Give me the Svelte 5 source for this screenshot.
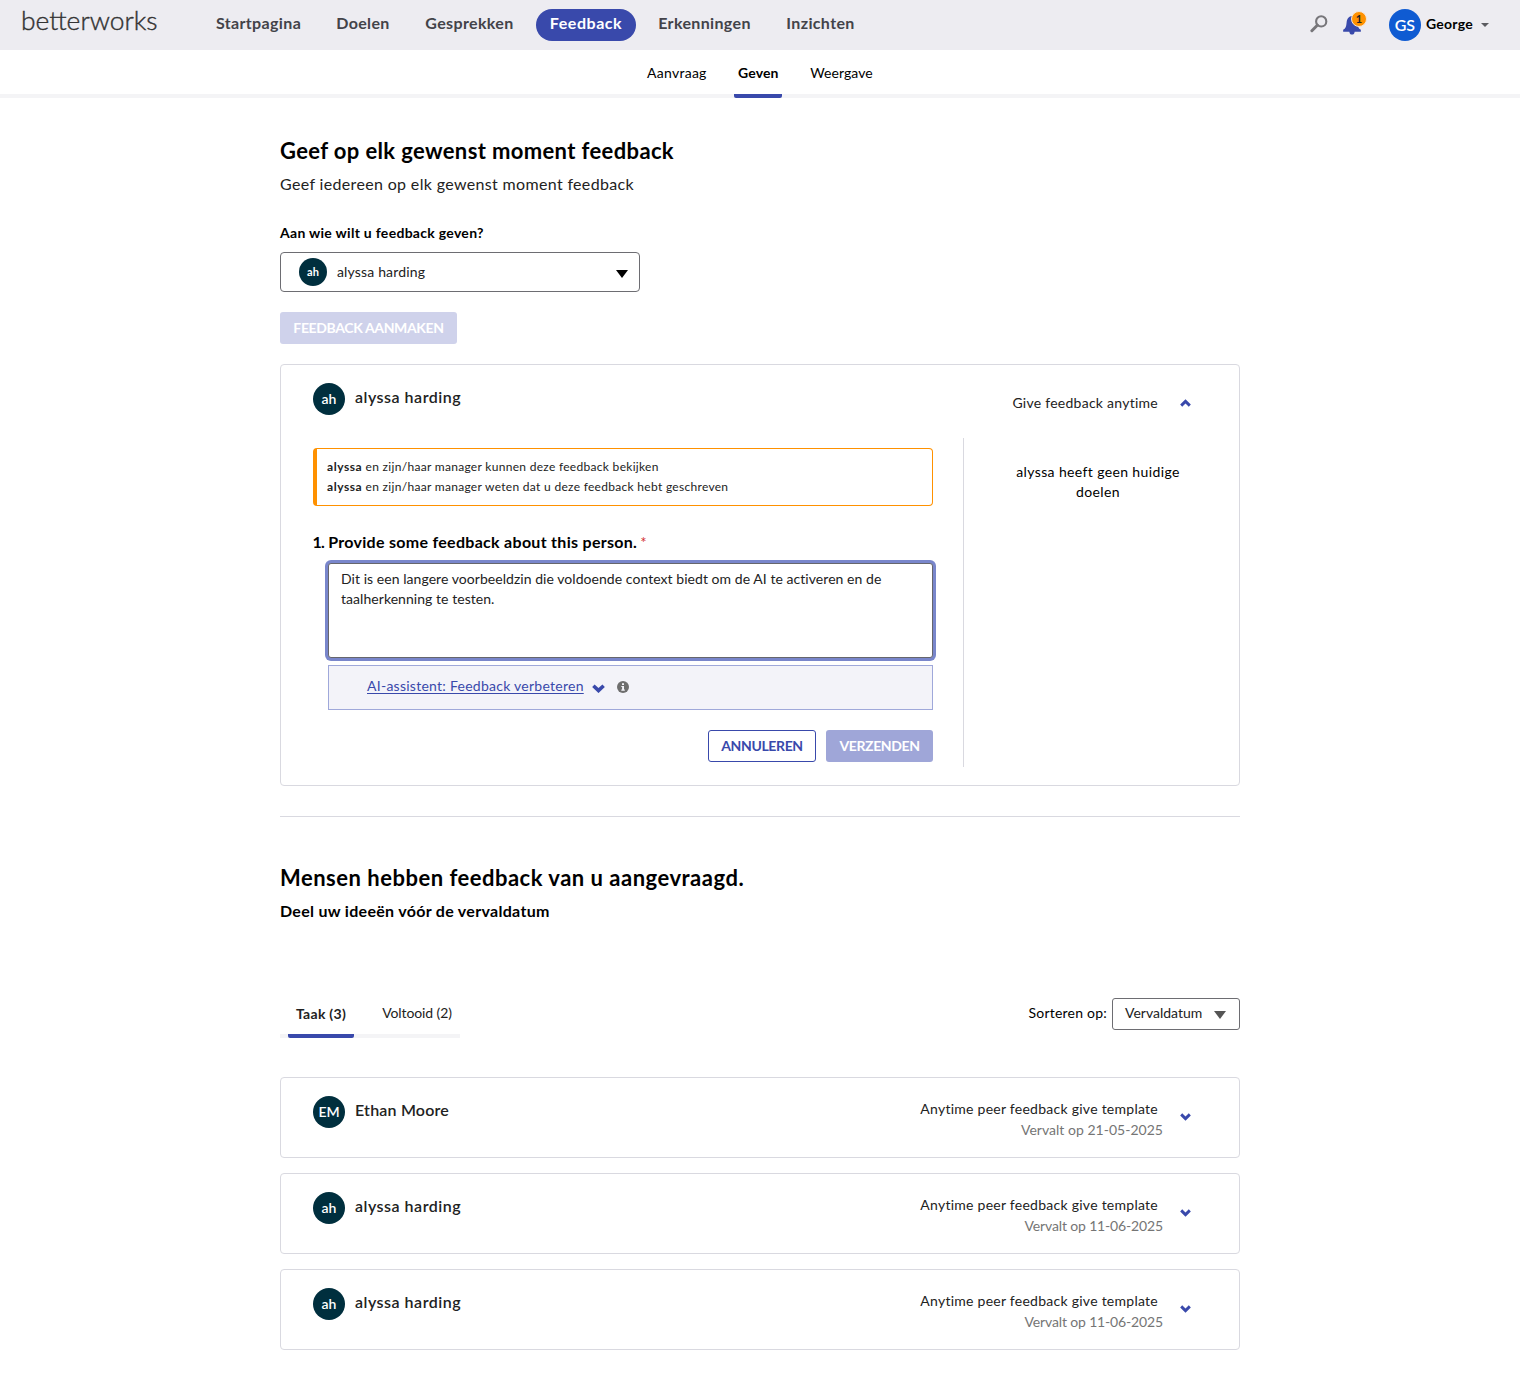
<script>
  const navItems = ['Startpagina', 'Doelen', 'Gesprekken', 'Feedback', 'Erkenningen', 'Inzichten'];
  const subItems = ['Aanvraag', 'Geven', 'Weergave'];
  const requests = [
    { initials: 'EM', name: 'Ethan Moore', due: '21-05-2025' },
    { initials: 'ah', name: 'alyssa harding', due: '11-06-2025' },
    { initials: 'ah', name: 'alyssa harding', due: '11-06-2025' },
  ];

  let activeNav = $state('Feedback');
  let activeSub = $state('Geven');
  let feedback = $state(
    'Dit is een langere voorbeeldzin die voldoende context biedt om de AI te activeren en de taalherkenning te testen.'
  );
</script>

{#snippet chevron(up, large)}
  <svg class="chevron" class:up class:large viewBox="0 0 12 9" aria-hidden="true">
    <path d="M2.3 .4 6 3.800 9.700 .4 12 2.800 6 8.600 0 2.800Z" />
  </svg>
{/snippet}

<header class="topbar">
  <div class="logo">betterworks</div>
  <nav class="main-nav">
    {#each navItems as item}
      <button class="nav-item" class:active={item === activeNav} onclick={() => (activeNav = item)}>{item}</button>
    {/each}
  </nav>
  <div class="tools">
    <svg class="search" viewBox="0 0 18 18" aria-hidden="true">
      <circle cx="11.200" cy="6.400" r="5.100" />
      <path d="M7.300 10.300 1.900 15.700" />
    </svg>
    <div class="bell">
      <svg viewBox="0 0 20 20" aria-hidden="true">
        <path d="M10 0C6 .6 4.600 3.400 4.300 7 4 10.800 3.200 13 .7 14.600V16.600H7.200C7.400 18.600 8.500 19.600 10 19.600S12.600 18.600 12.800 16.600H19.300V14.600C16.800 13 16 10.800 15.700 7 15.400 3.400 14 .6 10 0Z" />
      </svg>
      <span class="badge">1</span>
    </div>
    <div class="user-avatar">GS</div>
    <span class="user-name">George</span>
    <span class="user-caret"></span>
  </div>
</header>

<nav class="sub-nav">
  {#each subItems as item}
    <button class="sub-item" class:active={item === activeSub} onclick={() => (activeSub = item)}>{item}</button>
  {/each}
</nav>

<main>
  <h1>Geef op elk gewenst moment feedback</h1>
  <p class="lead">Geef iedereen op elk gewenst moment feedback</p>

  <div class="field-label">Aan wie wilt u feedback geven?</div>
  <div class="person-select">
    <div class="avatar small">ah</div>
    <span class="person">alyssa harding</span>
    <span class="triangle"></span>
  </div>
  <button class="btn create" disabled>FEEDBACK AANMAKEN</button>

  <section class="card form-card">
    <div class="form-head">
      <div class="avatar">ah</div>
      <span class="name">alyssa harding</span>
      <span class="template">Give feedback anytime</span>
      {@render chevron(true, false)}
    </div>
    <div class="form-body">
      <div class="form-main">
        <div class="notice">
          <div><b>alyssa</b> en zijn/haar manager kunnen deze feedback bekijken</div>
          <div><b>alyssa</b> en zijn/haar manager weten dat u deze feedback hebt geschreven</div>
        </div>
        <div class="question"><span class="number">1.</span> Provide some feedback about this person. <span class="required">*</span></div>
        <textarea bind:value={feedback} spellcheck="false"></textarea>
        <div class="assistant">
          <a href="#assistant">AI-assistent: Feedback verbeteren</a>
          {@render chevron(false, true)}
          <svg class="info" viewBox="0 0 12 12" aria-hidden="true">
            <circle cx="6" cy="6" r="6" />
            <path d="M5 2.200H7V3.900H5ZM4.300 5H7V8.500H7.800V9.700H4.300V8.500H5.100V6.100H4.300Z" />
          </svg>
        </div>
        <div class="actions">
          <button class="btn cancel">ANNULEREN</button>
          <button class="btn send" disabled>VERZENDEN</button>
        </div>
      </div>
      <aside>alyssa heeft geen huidige doelen</aside>
    </div>
  </section>

  <hr />

  <h2>Mensen hebben feedback van u aangevraagd.</h2>
  <p class="sub-lead">Deel uw ideeën vóór de vervaldatum</p>

  <div class="list-bar">
    <div class="tabs">
      <button class="tab active">Taak (3)</button>
      <button class="tab">Voltooid (2)</button>
    </div>
    <div class="sort">
      <span class="sort-label">Sorteren op:</span>
      <div class="sort-select"><span>Vervaldatum</span><span class="triangle"></span></div>
    </div>
  </div>

  <div class="requests">
    {#each requests as request}
      <article class="card request">
        <div class="avatar">{request.initials}</div>
        <span class="name">{request.name}</span>
        <div class="meta">
          <div class="template">Anytime peer feedback give template</div>
          <div class="due" class:narrow={request.due.startsWith('11')}>Vervalt op {request.due}</div>
        </div>
        {@render chevron(false, false)}
      </article>
    {/each}
  </div>
</main>

<style>
  :global(body) {
    background: #fff;
    color: #000;
    font-family: Lato, "Open Sans", sans-serif;
    font-size: 14px;
    letter-spacing: 0.27px;
  }
  :global(#app) { height: 1380px; overflow: hidden; }
  button, textarea { font: inherit; letter-spacing: inherit; color: inherit; margin: 0; }
  button { border: 0; background: none; padding: 0; white-space: nowrap; }
  h1, h2, p { margin: 0; }
  svg { display: block; flex: none; }

  .topbar { height: 50px; background: #edecf1; display: flex; }
  .logo {
    width: 181px;
    padding-left: 21px;
    font-size: 26.400px;
    font-weight: 300;
    line-height: 40px;
    letter-spacing: 0;
    color: #333;
    -webkit-text-stroke: 0.4px #333;
  }
  .main-nav {
    display: grid;
    grid-template-columns: 113px 80px 117px 100px 121px 95px;
    gap: 8px;
    height: 32px;
    margin-top: 9px;
  }
  .nav-item {
    font-size: 16px;
    font-weight: 700;
    letter-spacing: 0.36px;
    line-height: 28px;
    padding-bottom: 4px;
    color: #434349;
    border-radius: 16px;
  }
  .nav-item.active { background: #3949ab; color: #fff; letter-spacing: 0.55px; }
  .tools { margin-left: auto; display: flex; align-items: center; padding-right: 31px; }
  .search { width: 18px; height: 18px; margin: 0 14px 2px 0; fill: none; stroke: #77767a; stroke-width: 2.1; }
  .search path { stroke-width: 3; stroke-linecap: round; }
  .bell { position: relative; width: 20px; height: 20px; margin: 2px 27px 0 0; }
  .bell svg { width: 20px; height: 19px; fill: #3949ab; }
  .badge {
    position: absolute;
    left: 9px;
    top: -5px;
    width: 14px;
    height: 14px;
    border: 1px solid #f6e6d4;
    border-radius: 50%;
    background: #ff9100;
    font-size: 11px;
    font-weight: 700;
    line-height: 14px;
    letter-spacing: 0;
    text-align: center;
    color: #222;
  }
  .user-avatar {
    width: 32px;
    height: 32px;
    border-radius: 50%;
    background: #0f5bd2;
    color: #fff;
    font-size: 16px;
    font-weight: 600;
    line-height: 31px;
    letter-spacing: 0;
    text-align: center;
  }
  .user-name { margin: 0 8px 2px 5px; font-weight: 700; line-height: 20px; }
  .user-caret { border: 4px solid transparent; border-top-color: #5b5b60; border-bottom: 0; }

  .sub-nav {
    height: 44px;
    border-bottom: 4px solid #f4f4f6;
    display: flex;
    justify-content: center;
    gap: 24px;
  }
  .sub-item { height: 48px; padding: 0 4px; line-height: 20px; padding-bottom: 2px; }
  .sub-item:first-child { width: 67px; }
  .sub-item:last-child { width: 71px; letter-spacing: 0.1px; }
  .sub-item.active {
    width: 48px;
    font-weight: 700;
    letter-spacing: 0.15px;
    background: linear-gradient(#3949ab, #3949ab) bottom / 100% 4px no-repeat;
    border-radius: 2px;
  }

  main { width: 960px; margin: 0 auto; padding-top: 39px; }
  h1, h2 { font-size: 22px; font-weight: 700; line-height: 28px; letter-spacing: 0.365px; }
  h2 { letter-spacing: 0.5px; }
  .lead { margin-top: 9px; font-size: 16px; line-height: 20px; letter-spacing: 0.34px; color: #222; }
  .field-label { margin-top: 29px; font-weight: 700; line-height: 20px; letter-spacing: 0.29px; }
  .person-select {
    box-sizing: border-box;
    width: 360px;
    height: 40px;
    margin-top: 9px;
    padding: 0 11px 0 18px;
    border: 1px solid #6d6d72;
    border-radius: 4px;
    display: flex;
    align-items: center;
  }
  .person { margin: 0 0 1px 10px; letter-spacing: 0.16px; color: #222; }
  .triangle { margin: 3px 0 0 auto; border: solid transparent; border-width: 8px 6.5px 0; border-top-color: #000; }
  .avatar {
    flex: none;
    width: 32px;
    height: 32px;
    border-radius: 50%;
    background: #002f3e;
    color: #fff;
    font-weight: 600;
    line-height: 32px;
    letter-spacing: 0;
    text-align: center;
  }
  .avatar.small { width: 28px; height: 28px; font-size: 11px; font-weight: 700; line-height: 27px; margin-top: -1px; }
  .btn {
    box-sizing: border-box;
    height: 32px;
    border-radius: 3px;
    font-weight: 700;
    letter-spacing: -0.37px;
    line-height: 30px;
    text-align: center;
  }
  .create { display: block; width: 177px; margin-top: 20px; background: #cfd2eb; color: #fff; }

  .card { box-sizing: border-box; border: 1px solid #d9d9e0; border-radius: 4px; }
  .form-card { height: 422px; margin-top: 20px; }
  .form-head { display: flex; height: 73px; padding: 18px 48px 0 32px; box-sizing: border-box; }
  .name { margin-left: 10px; padding-top: 4px; font-size: 16px; font-weight: 600; line-height: 20px; letter-spacing: 0.5px; color: #222; }
  .request:first-child .name { letter-spacing: 0.2px; }
  .template { letter-spacing: 0.26px; color: #222; line-height: 20px; }
  .form-head .template { margin-left: auto; padding-top: 10px; }
  .chevron { width: 11px; height: 8px; fill: #3949ab; }
  .chevron.up { transform: rotate(180deg); }
  .chevron.large { width: 13px; height: 9.500px; }
  .form-head .chevron { margin: 16px 0 0 22px; }

  .form-body { display: flex; height: 329px; }
  .form-main { width: 620px; padding: 10px 30px 0 32px; border-right: 1px solid #d9d9e0; }
  .notice {
    box-sizing: border-box;
    height: 58px;
    padding: 8px 10px;
    border: 1px solid #ff9100;
    border-left-width: 4px;
    border-radius: 4px;
    font-size: 12px;
    line-height: 20px;
    letter-spacing: 0.3px;
    color: #222;
  }
  .notice b { font-weight: 700; letter-spacing: 0.55px; }
  .question { height: 22px; margin-top: 25px; font-size: 16px; font-weight: 700; line-height: 22px; letter-spacing: 0.29px; }
  .number { margin-left: -0.5px; letter-spacing: -0.8px; }
  .required { margin-left: -1px; font-size: 15px; line-height: 20px; font-weight: 400; color: #d32f2f; }
  textarea {
    display: block;
    box-sizing: border-box;
    width: 605px;
    height: 95px;
    margin: 10px 0 0 15px;
    padding: 5px 12px;
    border: 1px solid #66666c;
    border-radius: 3px;
    outline: 0;
    box-shadow: 0 0 0 3px #7986cb;
    resize: none;
    overflow: hidden;
    line-height: 20px;
    letter-spacing: 0.05px;
    color: #222;
  }
  .assistant {
    box-sizing: border-box;
    width: 605px;
    height: 45px;
    margin: 7px 0 0 15px;
    padding-left: 38px;
    border: 1px solid #9fa8da;
    background: #f3f3f9;
    display: flex;
    align-items: center;
  }
  .assistant a { color: #3949ab; line-height: 20px; padding-bottom: 3px; text-underline-offset: 2px; letter-spacing: 0.26px; }
  .assistant .chevron { margin: 2px 12px 0 8px; }
  .info { width: 12px; height: 12px; margin-bottom: 1px; fill: #6e6e6e; }
  .info path { fill: #f3f3f9; }
  .actions { display: flex; justify-content: flex-end; gap: 10px; margin-top: 20px; }
  .cancel { width: 108px; border: 1px solid #3949ab; color: #3949ab; }
  .send { width: 107px; background: #9fa6d8; color: #fff; }
  aside { width: 180px; margin: 24px auto 0 44px; line-height: 20px; letter-spacing: 0.37px; text-align: center; }

  hr { height: 1px; margin: 30px 0 47px; border: 0; background: #d9d9e0; }
  .sub-lead { margin-top: 9px; font-size: 16px; font-weight: 700; line-height: 20px; letter-spacing: 0.3px; }

  .list-bar { display: flex; justify-content: space-between; height: 40px; margin-top: 77px; }
  .tabs { display: flex; width: 172px; padding-left: 8px; background: linear-gradient(#f4f4f6, #f4f4f6) bottom / 100% 4px no-repeat; }
  .tab { flex: none; height: 40px; width: 70px; padding: 0 0 10px; color: #222; line-height: 20px; margin-left: 28px; letter-spacing: -0.1px; }
  .tab.active {
    width: 66px;
    margin-left: 0;
    padding-bottom: 8px;
    font-weight: 700;
    letter-spacing: 0.3px;
    background: linear-gradient(#3949ab, #3949ab) bottom / 100% 4px no-repeat;
    border-radius: 2px;
  }
  .sort { display: flex; line-height: 30px; }
  .sort-label { margin-right: 5px; letter-spacing: 0.22px; }
  .sort-select {
    box-sizing: border-box;
    display: flex;
    width: 128px;
    height: 32px;
    padding: 0 13px 0 12px;
    border: 1px solid #6d6d72;
    border-radius: 3px;
    color: #222;
    line-height: 28px;
    letter-spacing: 0;
  }
  .sort-select .triangle { border-top-color: #555; margin-top: 12px; height: 0; }

  .requests { display: grid; gap: 15px; margin-top: 39px; }
  .request { display: flex; height: 81px; padding: 18px 48px 0 32px; }
  .meta { margin-left: auto; padding-top: 3px; text-align: right; line-height: 20px; }
  .meta .template { padding-right: 5px; }
  .due { margin-top: 1px; letter-spacing: 0.02px; color: #757575; }
  .due.narrow { letter-spacing: -0.15px; }
  .request .chevron { margin: 17px 0 0 17px; }
</style>
